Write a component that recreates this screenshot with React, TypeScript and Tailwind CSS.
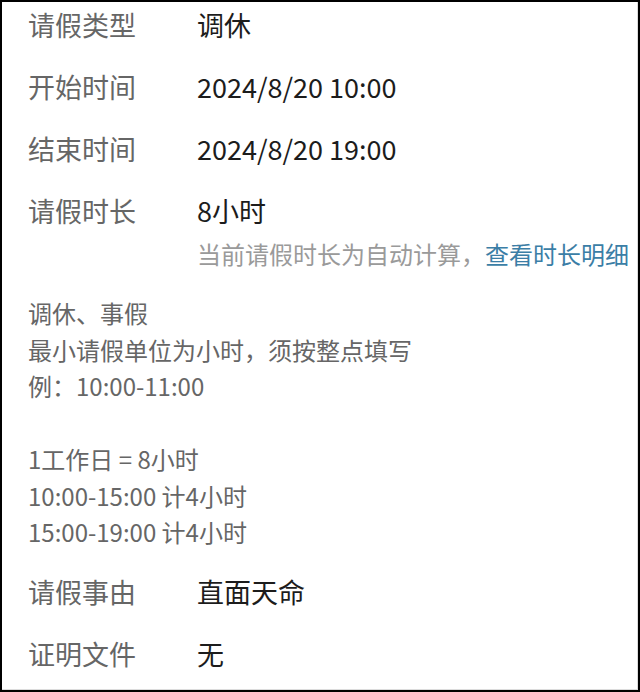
const font = { fontFamily: '"Noto Sans CJK SC", "Noto Sans", sans-serif' }

function Row({ label, value }: { label: string; value: string }) {
  return (
    <div className="flex items-center h-[36px]">
      <div className="w-[169px] shrink-0 text-[27px] text-[#666]">{label}</div>
      <div className="text-[27px] text-[#1c1c1c]">{value}</div>
    </div>
  )
}

export default function App() {
  const notes = [
    '调休、事假',
    '最小请假单位为小时，须按整点填写',
    '例：10:00-11:00',
    '',
    '1工作日 = 8小时',
    '10:00-15:00 计4小时',
    '15:00-19:00 计4小时',
  ]

  return (
    <div className="w-[640px] h-[692px] bg-black p-[2px]" style={font}>
      <div className="w-full h-full bg-white border-r border-b border-[#dcdcdc] pt-[5px] pl-[26px] pr-[4px] overflow-hidden leading-[36px]">
        <div className="flex flex-col gap-[26px]">
          <Row label="请假类型" value="调休" />
          <Row label="开始时间" value="2024/8/20 10:00" />
          <Row label="结束时间" value="2024/8/20 19:00" />
          <Row label="请假时长" value="8小时" />
        </div>

        <div className="mt-[7px] pl-[169px] text-[24px] text-[#9a9a9a] whitespace-nowrap h-[36px]">
          当前请假时长为自动计算，<span className="text-[#3b7ea6]">查看时长明细</span>
        </div>

        <div className="mt-[23px] text-[24px] text-[#666] leading-[36.5px]">
          {notes.map((line, i) => (
            <div key={i} className="h-[36.5px] whitespace-nowrap">
              {line}
            </div>
          ))}
        </div>

        <div className="mt-[23px] flex flex-col gap-[26px]">
          <Row label="请假事由" value="直面天命" />
          <Row label="证明文件" value="无" />
        </div>
      </div>
    </div>
  )
}
